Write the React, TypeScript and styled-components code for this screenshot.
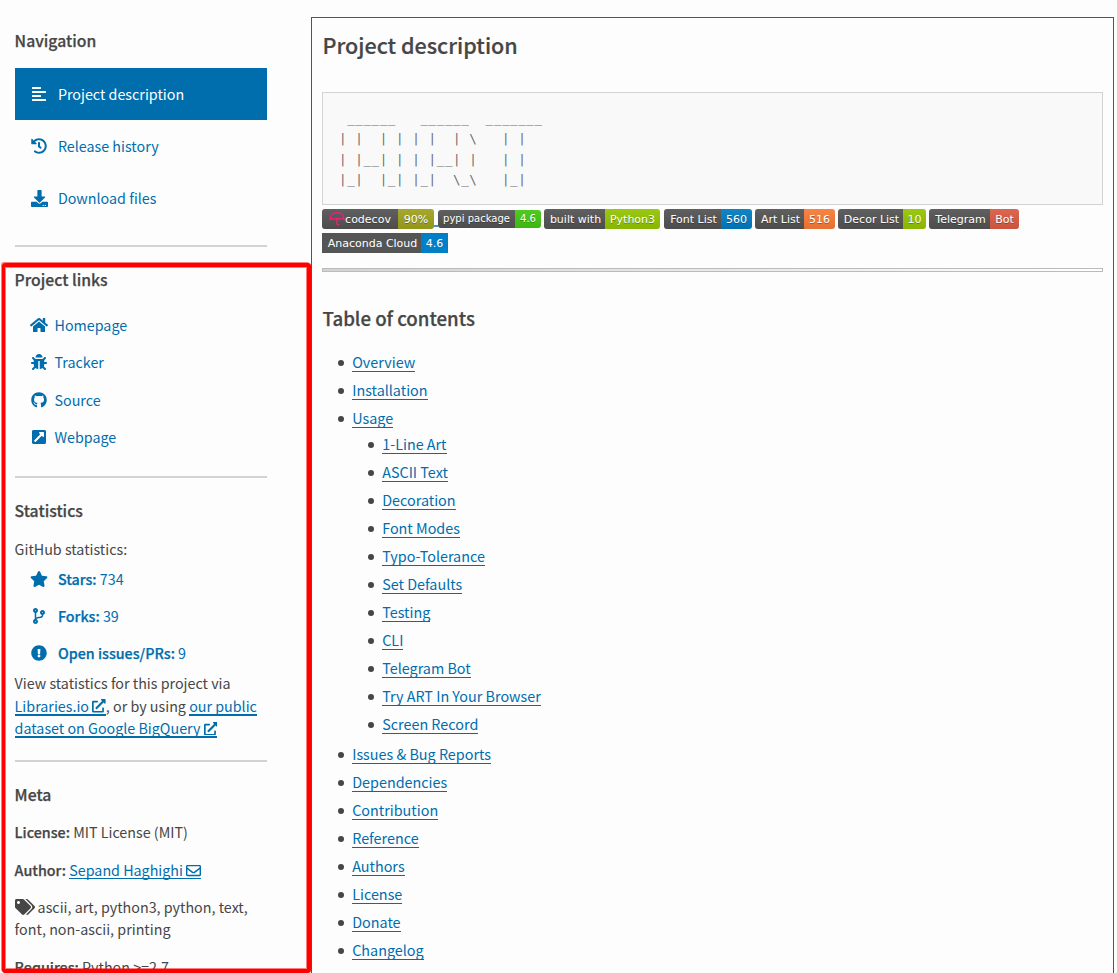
import React from "react";
import styled, { createGlobalStyle } from "styled-components";
import {
  FaAlignLeft,
  FaBug,
  FaCodeBranch,
  FaDownload,
  FaExclamationCircle,
  FaExternalLinkAlt,
  FaExternalLinkSquareAlt,
  FaGithub,
  FaHistory,
  FaHome,
  FaRegEnvelope,
  FaStar,
  FaTags,
} from "react-icons/fa";

const blue = "#006dad";
const ink = "#464646";

const GlobalStyle = createGlobalStyle`
  * { box-sizing: border-box; }
  body {
    margin: 0;
    background: #fdfdfd;
    color: ${ink};
    font-family: "Noto Sans CJK JP", "Noto Sans", sans-serif;
    font-size: 14.3px;
    line-height: 22px;
    overflow: hidden;
  }
`;

const Page = styled.div`
  position: relative;
  display: flex;
  align-items: flex-start;
  width: 1117px;
  height: 973px;
  overflow: hidden;
`;

const Sidebar = styled.aside`
  width: 311px;
  padding: 28px 44px 0 15px;
`;

const Section = styled.section<{ $height: number }>`
  height: ${(p) => p.$height}px;
  border-bottom: 2px solid #d3d3d3;
`;

const SideTitle = styled.h3<{ $top?: number }>`
  margin: 0 0 -2px -0.4px;
  padding-top: ${(p) => p.$top ?? 0}px;
  font-size: 15.75px;
  font-weight: 500;
  line-height: 26px;
  -webkit-text-stroke: 0.25px ${ink};
`;

const NavList = styled.nav`
  padding-top: 16px;
`;

const NavItem = styled.a<{ $active?: boolean }>`
  display: flex;
  align-items: center;
  gap: 10.4px;
  height: 52px;
  padding-left: 15.5px;
  color: ${(p) => (p.$active ? "#fff" : blue)};
  background: ${(p) => (p.$active ? blue : "transparent")};
`;

const IconBox = styled.span<{ $size?: number }>`
  display: flex;
  justify-content: center;
  width: 17px;
  font-size: ${(p) => p.$size ?? 16}px;
  svg {
    flex: none;
  }
`;

const LinkList = styled.div`
  padding-top: 15.4px;
`;

const SideLink = styled.a<{ $gap: number; $height: number }>`
  display: flex;
  align-items: center;
  gap: ${(p) => p.$gap}px;
  height: ${(p) => p.$height}px;
  padding-left: 15.5px;
  color: ${blue};
`;

const Strong = styled.b`
  font-weight: 500;
  -webkit-text-stroke: 0.25px currentColor;
`;

const Para = styled.p<{ $top?: number; $line?: number }>`
  margin: 0 0 0 -0.4px;
  padding-top: ${(p) => p.$top ?? 0}px;
  line-height: ${(p) => p.$line ?? 22.4}px;
`;

const UnderLink = styled.a<{ $thick?: boolean }>`
  color: ${blue};
  background: linear-gradient(${blue}, ${blue}) 0 calc(100% - ${(p) => (p.$thick ? 0 : 1)}px) / 100% ${(p) => (p.$thick ? 2 : 1)}px no-repeat;
  svg {
    vertical-align: -1px;
  }
`;

const MailIcon = styled(FaRegEnvelope)`
  && {
    vertical-align: -2px;
  }
`;

const TagIcon = styled(FaTags)`
  font-size: 20px;
  height: 18px;
  vertical-align: -3px;
  margin-right: 3px;
`;

const Highlight = styled.div`
  position: absolute;
  left: 2px;
  top: 263px;
  width: 309px;
  height: 710px;
  border: 4px solid #f00;
  border-left-width: 3px;
  border-radius: 3px;
  box-shadow: -1px -1px 0 rgba(255, 0, 0, 0.5), inset 0 0 0 1px rgba(255, 0, 0, 0.5);
  pointer-events: none;
`;

const Main = styled.main`
  width: 803px;
  height: 980px;
  margin-top: 17px;
  padding: 10px 10px 0;
  border: 1px solid ${blue};
  border-bottom: 0;
`;

const PageTitle = styled.h2`
  margin: 0 0.5px;
  font-size: 21.55px;
  font-weight: 500;
  line-height: 34px;
  -webkit-text-stroke: 0.2px ${ink};
`;

const Banner = styled.pre`
  height: 113px;
  margin: 30px 0 0;
  padding: 16px 16px 0;
  border: 1px solid #d3d3d3;
  background: #f9f9f9;
  color: #6c6c6c;
  font: 12.5px/20.4px "DejaVu Sans Mono", monospace;
  letter-spacing: 0.62px;
`;

const Badges = styled.div`
  display: flex;
  flex-wrap: wrap;
  align-items: center;
  row-gap: 4px;
  padding-top: 4px;
`;

const BadgeLink = styled.a<{ $gap: number; $lined?: boolean }>`
  padding-right: ${(p) => p.$gap}px;
  background: ${(p) => (p.$lined ? `linear-gradient(#3d97cc, #3d97cc) 0 16px / 100% 2px no-repeat` : "none")};
`;

const BadgeBody = styled.span<{ $flat?: boolean; $small?: boolean }>`
  display: flex;
  height: ${(p) => (p.$small ? 18 : 20)}px;
  border-radius: ${(p) => (p.$flat ? 0 : 3)}px;
  overflow: hidden;
  color: #fff;
  font: ${(p) => (p.$small ? 10 : 11)}px/${(p) => (p.$small ? 18 : 19)}px "DejaVu Sans", sans-serif;
  text-shadow: ${(p) => (p.$flat ? "none" : "0 1px rgba(1,1,1,.3)")};
`;

const BadgePart = styled.span<{ $width: number; $color: string; $flat?: boolean; $shift?: number }>`
  display: flex;
  align-items: center;
  justify-content: center;
  width: ${(p) => p.$width}px;
  padding-left: ${(p) => p.$shift ?? 0}px;
  white-space: nowrap;
  background: ${(p) => (p.$flat ? "" : "linear-gradient(rgba(187,187,187,.1), rgba(0,0,0,.1))")} ${(p) => p.$color};
`;

const Rule = styled.hr`
  height: 4px;
  margin: 15px 0 0;
  border: 1px solid #bbb;
  background: linear-gradient(90deg, #d3d3d3, #fff);
`;

const TocTitle = styled.h3`
  margin: 32px 0.5px 0;
  font-size: 18.65px;
  font-weight: 500;
  line-height: 28px;
  -webkit-text-stroke: 0.25px ${ink};
`;

const Toc = styled.ul`
  margin: 17px 0 0;
  padding: 0 0 0 30px;
  list-style: none;
`;

const SubToc = styled(Toc)`
  margin: -2px 0 2px;
`;

const TocRow = styled.div`
  display: flex;
  align-items: center;
  height: 28px;
  margin-left: -14px;
  padding-bottom: 2px;
  font-size: 14.36px;
  &::before {
    content: "";
    flex: none;
    width: 6.4px;
    height: 6.4px;
    margin: 2px 7.8px 0 0;
    border-radius: 50%;
    background: ${ink};
  }
`;

const BADGES = [
  { label: "codecov", value: "90%", lw: 76, vw: 36, gap: 4, color: "#a4a61d", codecov: true },
  { label: "pypi package", value: "4.6", lw: 77, vw: 26, gap: 3, color: "#4c1", small: true },
  { label: "built with", value: "Python3", lw: 61, vw: 55, gap: 4, color: "#97ca00" },
  { label: "Font List", value: "560", lw: 57, vw: 31, gap: 3, color: "#007ec6" },
  { label: "Art List", value: "516", lw: 49, vw: 31, gap: 3, color: "#fe7d37" },
  { label: "Decor List", value: "10", lw: 65, vw: 23, gap: 3, color: "#97ca00" },
  { label: "Telegram", value: "Bot", lw: 61, vw: 29, gap: 3, color: "#e05d44" },
  { label: "Anaconda Cloud", value: "4.6", lw: 99, vw: 27, gap: 3, color: "#007ec6", flat: true },
];

const TOC: { label: string; children?: string[] }[] = [
  { label: "Overview" },
  { label: "Installation" },
  {
    label: "Usage",
    children: [
      "1-Line Art",
      "ASCII Text",
      "Decoration",
      "Font Modes",
      "Typo-Tolerance",
      "Set Defaults",
      "Testing",
      "CLI",
      "Telegram Bot",
      "Try ART In Your Browser",
      "Screen Record",
    ],
  },
  { label: "Issues & Bug Reports" },
  { label: "Dependencies" },
  { label: "Contribution" },
  { label: "Reference" },
  { label: "Authors" },
  { label: "License" },
  { label: "Donate" },
  { label: "Changelog" },
];

const ART = [
  " ______   ______  _______",
  "| |  | | | |  | \\   | |",
  "| |__| | | |__| |   | |",
  "|_|  |_| |_|  \\_\\   |_|",
].join("\n");

const Umbrella = () => (
  <svg width="16" height="16" viewBox="0 0 16 16" fill="none" stroke="#f01f7a" strokeWidth="1.4">
    <path d="M1 8.3C1 4.3 4 1.7 8 1.7s7 2.6 7 6.6c-1.4-1.1-3-1-4.2.2C9 7 7 7 5.2 8.5 4 7.3 2.4 7.2 1 8.3Z" />
    <path d="M8 7.5v5.3c0 1.4 1.8 1.4 2 .2" />
  </svg>
);

const App = () => (
  <Page>
    <GlobalStyle />
    <Sidebar>
      <Section $height={219}>
        <SideTitle>Navigation</SideTitle>
        <NavList>
          <NavItem $active>
            <IconBox><FaAlignLeft /></IconBox>Project description
          </NavItem>
          <NavItem><IconBox><FaHistory /></IconBox>Release history</NavItem>
          <NavItem><IconBox $size={17}><FaDownload /></IconBox>Download files</NavItem>
        </NavList>
      </Section>
      <Section $height={231}>
        <SideTitle $top={20}>Project links</SideTitle>
        <LinkList>
          <SideLink $gap={7} $height={37.4}><IconBox $size={18}><FaHome /></IconBox>Homepage</SideLink>
          <SideLink $gap={7} $height={37.4}><IconBox><FaBug /></IconBox>Tracker</SideLink>
          <SideLink $gap={7} $height={37.4}><IconBox><FaGithub /></IconBox>Source</SideLink>
          <SideLink $gap={7} $height={37.4}><IconBox><FaExternalLinkSquareAlt /></IconBox>Webpage</SideLink>
        </LinkList>
      </Section>
      <Section $height={284}>
        <SideTitle $top={20}>Statistics</SideTitle>
        <Para $top={16}>GitHub statistics:</Para>
        <div>
          <SideLink $gap={10.4} $height={37}><IconBox $size={18}><FaStar /></IconBox><span><Strong>Stars:</Strong> 734</span></SideLink>
          <SideLink $gap={10.4} $height={37}><IconBox><FaCodeBranch /></IconBox><span><Strong>Forks:</Strong> 39</span></SideLink>
          <SideLink $gap={10.4} $height={37}><IconBox><FaExclamationCircle /></IconBox><span><Strong>Open issues/PRs:</Strong> 9</span></SideLink>
        </div>
        <Para $top={1}>
          View statistics for this project via{" "}
          <UnderLink $thick>Libraries.io <FaExternalLinkAlt size={13.6} /></UnderLink>, or by using{" "}
          <UnderLink $thick>our public dataset on Google BigQuery <FaExternalLinkAlt size={13.6} /></UnderLink>
        </Para>
      </Section>
      <SideTitle $top={20.3}>Meta</SideTitle>
      <Para $top={15}><Strong>License:</Strong> MIT License (MIT)</Para>
      <Para $top={15}>
        <Strong>Author:</Strong> <UnderLink>Sepand Haghighi <MailIcon size={15} /></UnderLink>
      </Para>
      <Para $top={15} $line={22}><TagIcon />ascii, art, python3, python, text, font, non-ascii, printing</Para>
      <Para $top={15.8}><Strong>Requires:</Strong> Python &gt;=2.7</Para>
    </Sidebar>
    <Main>
      <PageTitle>Project description</PageTitle>
      <Banner>{ART}</Banner>
      <Badges>
        {BADGES.map((b) => (
          <BadgeLink key={b.label} $gap={b.gap} $lined={b.codecov}>
            <BadgeBody $flat={b.flat} $small={b.small}>
              <BadgePart $width={b.lw} $color="#555" $flat={b.flat} $shift={b.codecov || b.small ? 0 : 2}>
                {b.codecov && <Umbrella />}
                {b.label}
              </BadgePart>
              <BadgePart $width={b.vw} $color={b.color} $flat={b.flat}>{b.value}</BadgePart>
            </BadgeBody>
          </BadgeLink>
        ))}
      </Badges>
      <Rule />
      <TocTitle>Table of contents</TocTitle>
      <Toc>
        {TOC.map((item) => (
          <li key={item.label}>
            <TocRow><UnderLink>{item.label}</UnderLink></TocRow>
            {item.children && (
              <SubToc>
                {item.children.map((c) => (
                  <li key={c}><TocRow><UnderLink>{c}</UnderLink></TocRow></li>
                ))}
              </SubToc>
            )}
          </li>
        ))}
      </Toc>
    </Main>
    <Highlight />
  </Page>
);

export default App;
